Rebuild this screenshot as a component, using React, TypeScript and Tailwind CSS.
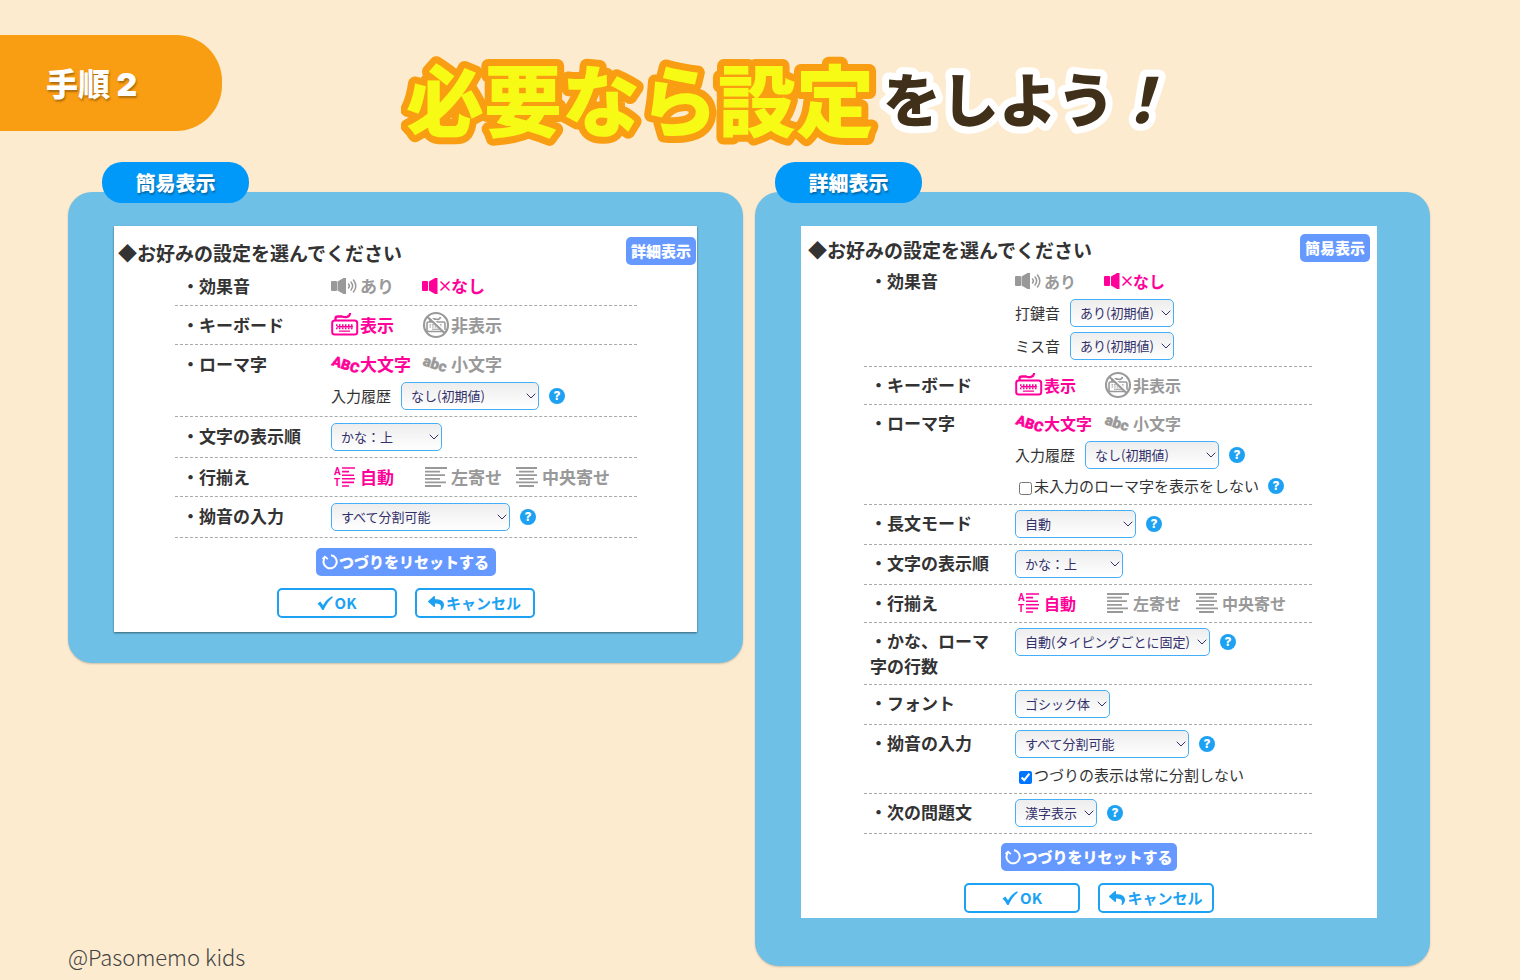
import type { ReactNode } from "react"
import { ChevronDown } from "lucide-react"
import { FaReply } from "react-icons/fa"

const SpeakerOn = () => (
  <svg width="28" height="20" viewBox="0 0 28 20" fill="currentColor">
    <rect x="0" y="5" width="6" height="10" rx="1" />
    <path d="M6.500 5.500 12.500 2H15v16h-2.500l-6-3.500z" />
    <g fill="none" stroke="currentColor" strokeWidth="1.500" strokeLinecap="round">
      <path d="M17.500 8q1.800 2 0 4" />
      <path d="M20 6q3.200 4 0 8" />
      <path d="M22.500 4q4.600 6 0 12" />
    </g>
  </svg>
)

const SpeakerOff = () => (
  <svg width="28" height="20" viewBox="0 0 28 20" fill="currentColor">
    <rect x="0" y="5" width="6" height="10" rx="1" />
    <path d="M7 5.500 13 2h2.500v16H13l-6-3.500z" />
    <path d="m19 6 8 8m0-8-8 8" fill="none" stroke="currentColor" strokeWidth="1.600" strokeLinecap="round" />
  </svg>
)

const Keyboard = () => (
  <svg width="28" height="24" viewBox="0 0 28 24" fill="none" stroke="currentColor" strokeLinecap="round">
    <rect x="1.200" y="7.500" width="25" height="14" rx="2.500" strokeWidth="2" />
    <path d="M4.500 7V5.500q0-2 2.500-2h4q2.500 1 5 .4 2.500-.8 3-3" strokeWidth="2.300" />
    <path d="M5 12.200h17.500M5 15.400h17.500" strokeWidth="1.800" strokeDasharray="1.500 1.500" strokeLinecap="butt" />
    <path d="M6.500 13.800h15" strokeWidth="1.400" />
    <path d="M8.500 18.200h10" strokeWidth="1.300" />
  </svg>
)

const KeyboardOff = () => (
  <svg width="28" height="28" viewBox="0 0 28 28" fill="none" stroke="currentColor">
    <rect x="5" y="11" width="18" height="9.500" rx="1.500" strokeWidth="1.600" />
    <path d="M8 11V9.500q0-1.500 2-1.500h3q4.500 1.500 5.500-2" strokeWidth="1.800" />
    <path d="M7.500 13.800h13M7.500 16h13" strokeWidth="1.200" strokeDasharray="1.600 1" />
    <path d="M10 18.200h8" strokeWidth="1" />
    <path d="m7 5 17 16" stroke="white" strokeWidth="1.400" />
    <path d="m5.500 6 17 16" strokeWidth="2" />
    <circle cx="14" cy="14" r="12" strokeWidth="2.100" />
  </svg>
)

const Letters = ({ children, size }: { children: string; size: number }) => (
  <svg width="28" height="24" viewBox="0 0 28 24" fill="currentColor" aria-hidden="true" className="overflow-visible">
    <text
      x="0"
      y="13"
      transform="rotate(18 0 13)"
      fontFamily="Roboto, sans-serif"
      fontSize={size}
      fontWeight="900"
      stroke="currentColor"
      strokeWidth="0.400"
    >
      {children}
    </text>
  </svg>
)

const AlignAuto = () => (
  <svg width="28" height="22" viewBox="0 0 28 22" fill="currentColor" aria-hidden="true" className="overflow-visible">
    <text x="3" y="9" fontFamily="Roboto, sans-serif" fontSize="10" fontWeight="700">
      A
    </text>
    <text x="3" y="20" fontFamily="Roboto, sans-serif" fontSize="10" fontWeight="700">
      T
    </text>
    <path
      d="M11 2h13M11 5.600h7M11 9.200h12M11 12.800h13M11 16.400h12M11 20h7"
      stroke="currentColor"
      strokeWidth="1.600"
    />
  </svg>
)

const AlignLeft = () => (
  <svg width="28" height="22" viewBox="0 0 28 22" stroke="currentColor" strokeWidth="1.800">
    <path d="M3 2h22M3 5.600h15M3 9.200h20M3 12.800h15M3 16.400h21M3 20h16" />
  </svg>
)

const AlignCenter = () => (
  <svg width="28" height="22" viewBox="0 0 28 22" stroke="currentColor" strokeWidth="1.800">
    <path d="M3 2h21M6 5.600h15M3 9.200h21M6 12.800h15M3 16.400h22M6 20h15" />
  </svg>
)

const Reset = () => (
  <svg width="16" height="18" viewBox="0 0 16 18" fill="none" stroke="currentColor">
    <path d="M9 2.200A6.600 6.600 0 1 1 2.800 4.800" strokeWidth="2" />
    <path d="M0.500 6 3 3.500l2.800 2.700" strokeWidth="1.600" />
  </svg>
)

const Check = () => (
  <svg width="16" height="16" viewBox="0 0 16 16" fill="currentColor">
    <path d="M0.500 8.500 3.300 6.500 6 10.200Q9.500 4 15.300 1.300L15.800 2.500Q10.500 6.500 6.600 15H5.300Q3.300 11 0.500 8.500z" />
  </svg>
)

type Choice = { icon: ReactNode; text: string }

const sound: Choice[] = [
  { icon: <SpeakerOn />, text: "あり" },
  { icon: <SpeakerOff />, text: "なし" },
]

const keyboard: Choice[] = [
  { icon: <Keyboard />, text: "表示" },
  { icon: <KeyboardOff />, text: "非表示" },
]

const romaji: Choice[] = [
  { icon: <Letters size={14}>ABC</Letters>, text: "大文字" },
  { icon: <Letters size={15}>abc</Letters>, text: "小文字" },
]

const align: Choice[] = [
  { icon: <AlignAuto />, text: "自動" },
  { icon: <AlignLeft />, text: "左寄せ" },
  { icon: <AlignCenter />, text: "中央寄せ" },
]

function Choices({ name, items, selected = 0, dense }: { name: string; items: Choice[]; selected?: number; dense?: boolean }) {
  return (
    <div className="flex h-[26px]">
      {items.map((item, index) => (
        <label
          key={item.text}
          className={`relative flex shrink-0 cursor-pointer items-center gap-px font-bold whitespace-nowrap text-[#999] has-checked:text-[#ff0099] ${
            dense ? "min-w-[89px] text-[16px]" : "min-w-[91px] text-[17px]"
          }`}
        >
          <input type="radio" name={name} defaultChecked={index === selected} className="sr-only" />
          {item.icon}
          {item.text}
        </label>
      ))}
    </div>
  )
}

function Help() {
  return (
    <button
      type="button"
      className="flex size-4 shrink-0 items-center justify-center rounded-full bg-[#1da1f2] font-[Inter,sans-serif] text-[12px] leading-none font-extrabold text-white"
    >
      ?
    </button>
  )
}

function Select({ label, value, width, help }: { label?: string; value: string; width: string; help?: boolean }) {
  return (
    <div className="flex items-center gap-[10px]">
      <label className="flex items-center gap-[10px] text-[15px] whitespace-nowrap">
        {label}
        <span className={`relative block ${width}`}>
          <select
            aria-label={label ?? value}
            className="block h-7 w-full appearance-none rounded-[5px] border border-[#45aef8] bg-linear-to-b from-[#ededed] to-white pr-4 pl-[9px] text-[13px] text-[#33306b]"
          >
            <option>{value}</option>
          </select>
          <ChevronDown
            strokeWidth={1.5}
            className="pointer-events-none absolute top-[6px] right-0 size-4 text-[#33306b]"
          />
        </span>
      </label>
      {help && <Help />}
    </div>
  )
}

function Tick({ text, checked, help }: { text: string; checked?: boolean; help?: boolean }) {
  return (
    <div className="flex h-6 items-center gap-[9px] pl-1">
      <label className="flex items-center gap-[2px] text-[15px] whitespace-nowrap">
        <input type="checkbox" defaultChecked={checked} className="mt-1 size-[13px]" />
        {text}
      </label>
      {help && <Help />}
    </div>
  )
}

function Row({ label, dense, children }: { label: string; dense?: boolean; children: ReactNode }) {
  return (
    <div
      className={`flex items-start border-b border-dashed border-[#aaa] pb-[6px] ${dense ? "pt-[5px]" : "pt-[6px]"}`}
    >
      <div
        className={`shrink-0 pr-5 text-[17px] leading-[25px] font-bold ${
          dense ? "w-[151px] pl-[6px]" : "w-[156px] pl-[7px]"
        }`}
      >
        {label}
      </div>
      <div className="flex flex-col gap-[5px]">{children}</div>
    </div>
  )
}

function Actions({ dense }: { dense?: boolean }) {
  const action = `flex h-[30px] items-center justify-center gap-[2px] rounded-[5px] border-2 border-[#1da1f2] text-[15px] font-bold text-[#1da1f2] ${
    dense ? "w-[116px]" : "w-[120px]"
  }`
  return (
    <div className={`flex flex-col items-center gap-3 ${dense ? "pt-[9px]" : "pt-[10px]"}`}>
      <button
        type="button"
        className={`flex h-7 items-center justify-center gap-px rounded-[5px] bg-[#6699ff] text-[15px] font-black text-white ${
          dense ? "w-[176px]" : "w-[180px]"
        }`}
      >
        <Reset />
        つづりをリセットする
      </button>
      <div className="flex gap-[18px]">
        <button type="button" className={action}>
          <Check />
          OK
        </button>
        <button type="button" className={action}>
          <FaReply className="size-4" />
          キャンセル
        </button>
      </div>
    </div>
  )
}

function Panel({ title, tab, children }: { title: string; tab: string; children: ReactNode }) {
  return (
    <section className="relative rounded-3xl bg-[#6fc0e6] pt-[34px] shadow-[0_1px_2px_rgba(0,0,0,0.2)]">
      <h2
        className={`absolute -top-[30px] flex h-[41px] w-[147px] items-center justify-center rounded-[20px] bg-[#0099f9] text-[20px] font-black text-white [text-shadow:1px_2px_2px_rgba(0,0,0,0.3)] ${tab}`}
      >
        {title}
      </h2>
      {children}
    </section>
  )
}

function Heading({ action, dense }: { action: string; dense?: boolean }) {
  return (
    <div
      className={`flex items-start justify-between ${dense ? "h-[37px] px-[7px] pt-2" : "h-[41px] pt-[11px] pr-px pl-1"}`}
    >
      <h3 className="text-[19px] leading-8 font-bold">◆お好みの設定を選んでください</h3>
      <button type="button" className="h-7 rounded-[5px] bg-[#6699ff] px-[5px] text-[15px] font-black text-white">
        {action}
      </button>
    </div>
  )
}

function SimpleSettings() {
  return (
    <div className="mx-[46px] mb-[31px] bg-white pb-[14px] shadow-[0_1px_2px_rgba(0,0,0,0.5)]">
      <Heading action="詳細表示" />
      <div className="mr-[60px] ml-[61px]">
        <Row label="・効果音">
          <Choices name="simple-sound" items={sound} selected={1} />
        </Row>
        <Row label="・キーボード">
          <Choices name="simple-keyboard" items={keyboard} />
        </Row>
        <Row label="・ローマ字">
          <Choices name="simple-romaji" items={romaji} />
          <Select label="入力履歴" value="なし(初期値)" width="w-[138px]" help />
        </Row>
        <Row label="・文字の表示順">
          <Select value="かな：上" width="w-[111px]" />
        </Row>
        <Row label="・行揃え">
          <Choices name="simple-align" items={align} />
        </Row>
        <Row label="・拗音の入力">
          <Select value="すべて分割可能" width="w-[179px]" help />
        </Row>
      </div>
      <Actions />
    </div>
  )
}

function DetailSettings() {
  return (
    <div className="mr-[53px] mb-12 ml-[46px] bg-white pb-[5px]">
      <Heading action="簡易表示" dense />
      <div className="mr-[65px] ml-[63px]">
        <Row label="・効果音" dense>
          <Choices name="detail-sound" items={sound} selected={1} dense />
          <Select label="打鍵音" value="あり(初期値)" width="w-[104px]" />
          <Select label="ミス音" value="あり(初期値)" width="w-[104px]" />
        </Row>
        <Row label="・キーボード" dense>
          <Choices name="detail-keyboard" items={keyboard} dense />
        </Row>
        <Row label="・ローマ字" dense>
          <Choices name="detail-romaji" items={romaji} dense />
          <Select label="入力履歴" value="なし(初期値)" width="w-[134px]" help />
          <Tick text="未入力のローマ字を表示をしない" help />
        </Row>
        <Row label="・長文モード" dense>
          <Select value="自動" width="w-[121px]" help />
        </Row>
        <Row label="・文字の表示順" dense>
          <Select value="かな：上" width="w-[108px]" />
        </Row>
        <Row label="・行揃え" dense>
          <Choices name="detail-align" items={align} dense />
        </Row>
        <Row label="・かな、ローマ字の行数" dense>
          <Select value="自動(タイピングごとに固定)" width="w-[195px]" help />
        </Row>
        <Row label="・フォント" dense>
          <Select value="ゴシック体" width="w-[95px]" />
        </Row>
        <Row label="・拗音の入力" dense>
          <Select value="すべて分割可能" width="w-[174px]" help />
          <Tick text="つづりの表示は常に分割しない" checked />
        </Row>
        <Row label="・次の問題文" dense>
          <Select value="漢字表示" width="w-[82px]" help />
        </Row>
      </div>
      <Actions dense />
    </div>
  )
}

// Outlined title lettering, the stroke sits behind the fill
const TitleArt = () => (
  <svg
    width="776"
    height="132"
    viewBox="0 0 776 132"
    strokeLinejoin="round"
    strokeWidth="14"
    paintOrder="stroke"
    fontFamily='"Noto Sans CJK JP", sans-serif'
    fontWeight="900"
  >
    <text x="482" y="87" fontSize="58" fill="#40301a" stroke="white">
      をしよう
    </text>
    <text x="709" y="88" fontSize="62" fill="#40301a" stroke="white" fontStyle="italic">
      ！
    </text>
    <text x="5" y="96" fontSize="78" fill="#f7fa14" stroke="#f99d12">
      必要なら設定
    </text>
  </svg>
)

export default function App() {
  return (
    <div className="min-h-screen bg-[#fdebd0] pb-[14px] font-['Noto_Sans_CJK_JP',sans-serif] text-[#333]">
      <header className="flex h-48 items-start pt-[35px]">
        <div className="flex h-24 w-[222px] shrink-0 items-center rounded-r-[46px] bg-[#f99d12] pt-1 pl-[46px] font-[Inter,'Noto_Sans_CJK_JP',sans-serif] text-[32px] font-black text-white [text-shadow:1px_2px_2px_rgba(0,0,0,0.3)]">
          手順 2
        </div>
        <h1 className="flex flex-1 justify-center pr-[164px]">
          <TitleArt />
        </h1>
      </header>

      <main className="grid grid-cols-2 gap-3 pr-[90px] pl-[68px]">
        <div className="flex flex-col justify-between">
          <Panel title="簡易表示" tab="left-[34px]">
            <SimpleSettings />
          </Panel>
          <p className="-mb-[6px] text-[22px] leading-8 font-light text-[#444]">@Pasomemo kids</p>
        </div>
        <Panel title="詳細表示" tab="left-5">
          <DetailSettings />
        </Panel>
      </main>
    </div>
  )
}
